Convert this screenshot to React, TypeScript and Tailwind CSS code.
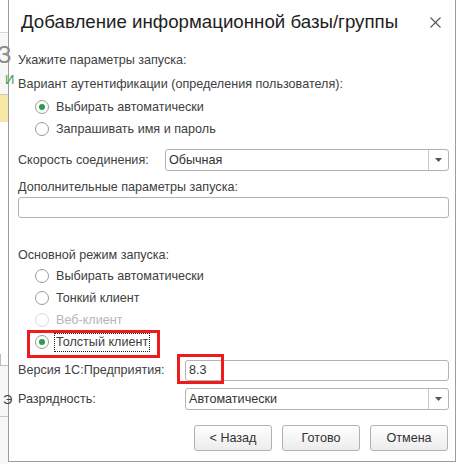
import React from "react";

const font = { fontFamily: '"Liberation Sans", Arial, sans-serif' };

function Radio({ checked, disabled, label, focus }: { checked?: boolean; disabled?: boolean; label: string; focus?: boolean }) {
  return (
    <div className="flex h-[22px] items-center pl-[17px]">
      <div
        className={
          "flex h-[14px] w-[14px] items-center justify-center rounded-full border bg-white " +
          (disabled ? "border-[#dcdcdc]" : "border-[#9a9a9a]")
        }
      >
        {checked && <div className="h-[6px] w-[6px] rounded-full bg-[#22a04b]" />}
      </div>
      <span
        className={
          "ml-[5px] px-[1px] leading-[17px] " +
          (disabled ? "text-[#b5b5b5]" : "text-[#404040]") +
          (focus ? " border border-dotted border-[#222]" : " border border-transparent")
        }
      >
        {label}
      </span>
    </div>
  );
}

function Select({ value, className }: { value: string; className: string }) {
  return (
    <div className={"flex h-[22px] items-stretch rounded-[3px] border border-[#b3b3b3] bg-white " + className}>
      <div className="flex flex-1 items-center pl-[3px] text-[#333]">{value}</div>
      <div className="flex w-[20px] items-center justify-center border-l border-[#c8c8c8]">
        <svg width="7" height="4" viewBox="0 0 7 4">
          <path d="M0 0 L7 0 L3.5 4 Z" fill="#555" />
        </svg>
      </div>
    </div>
  );
}

function Button({ label }: { label: string }) {
  return (
    <div className="flex h-[26px] w-[78px] items-center justify-center rounded-[3px] border border-[#b1b1b1] bg-gradient-to-b from-white to-[#ececec] text-[#333]">
      {label}
    </div>
  );
}

export default function App() {
  return (
    <div className="relative flex h-[464px] w-[456px] overflow-hidden bg-white text-[12.6px]" style={font}>
      {/* background window strip */}
      <div className="relative w-[8px] shrink-0 bg-[#f7f7f7]">
        <div className="h-[33px] border-b border-[#d6d6d6] bg-white" />
        <div className="ml-[-3px] mt-[8px] text-[24px] leading-[28px] text-[#8a8a8a]">З</div>
        <div className="ml-[5px] mt-[4px] text-[13px] leading-[14px] text-[#3aa04a]">И</div>
        <div className="mt-[7px] h-[28px] border-t border-[#c8c8c8] bg-[#f7e7a6]" />
        <div className="h-[232px] bg-white" />
        <div className="h-[12px] border-b border-l border-[#bdbdbd] bg-white" />
        <div className="ml-[3px] mt-[26px] text-[13px] leading-[16px] text-[#444]">Э</div>
        <div className="mt-[8px] h-[1px] bg-[#c8c8c8]" />
      </div>

      {/* dialog */}
      <div className="flex h-[462px] flex-1 flex-col border-b border-l border-r border-[#9d9d9d] bg-white">
        <div className="flex h-[44px] items-center justify-between pl-[12px] pr-[14px]">
          <span className="text-[18.7px] text-[#1e1e1e]">Добавление информационной базы/группы</span>
          <svg width="11" height="11" viewBox="0 0 11 11">
            <path d="M0.5 0.5 L10.5 10.5 M10.5 0.5 L0.5 10.5" stroke="#555" strokeWidth="1.1" />
          </svg>
        </div>
        <div className="flex flex-col pl-[9px] pr-[6px] text-[#404040]">
          <div className="mt-[7px] flex h-[18px] items-center">Укажите параметры запуска:</div>
          <div className="mt-[6px] flex h-[18px] items-center">Вариант аутентификации (определения пользователя):</div>
          <div className="mt-[3px]">
            <Radio checked label="Выбирать автоматически" />
            <Radio label="Запрашивать имя и пароль" />
          </div>
          <div className="mt-[9px] flex items-center">
            <span className="w-[147px]">Скорость соединения:</span>
            <Select value="Обычная" className="flex-1" />
          </div>
          <div className="mt-[7px] flex h-[18px] items-center">Дополнительные параметры запуска:</div>
          <div className="mt-[1px] h-[21px] rounded-[3px] border border-[#b3b3b3] bg-white" />
          <div className="mt-[28px] flex h-[18px] items-center">Основной режим запуска:</div>
          <div className="relative mt-[1px]">
            <Radio label="Выбирать автоматически" />
            <Radio label="Тонкий клиент" />
            <Radio disabled label="Веб-клиент" />
            <Radio checked focus label="Толстый клиент" />
            <div className="absolute left-[9px] top-[65px] h-[28px] w-[133px] border-[3px] border-[#ee1c1c]" />
          </div>
          <div className="relative mt-[7px] flex items-center">
            <span className="w-[167px]">Версия 1С:Предприятия:</span>
            <div className="flex h-[21px] flex-1 items-center rounded-[3px] border border-[#b3b3b3] bg-white pl-[3px] text-[#333]">8.3</div>
            <div className="absolute left-[159px] top-[-6px] h-[30px] w-[47px] border-[3px] border-[#ee1c1c]" />
          </div>
          <div className="mt-[7px] flex items-center">
            <span className="w-[167px]">Разрядность:</span>
            <Select value="Автоматически" className="flex-1" />
          </div>
          <div className="mt-[15px] flex justify-end gap-[10px] pr-[1px]">
            <Button label="< Назад" />
            <Button label="Готово" />
            <Button label="Отмена" />
          </div>
        </div>
      </div>
    </div>
  );
}
